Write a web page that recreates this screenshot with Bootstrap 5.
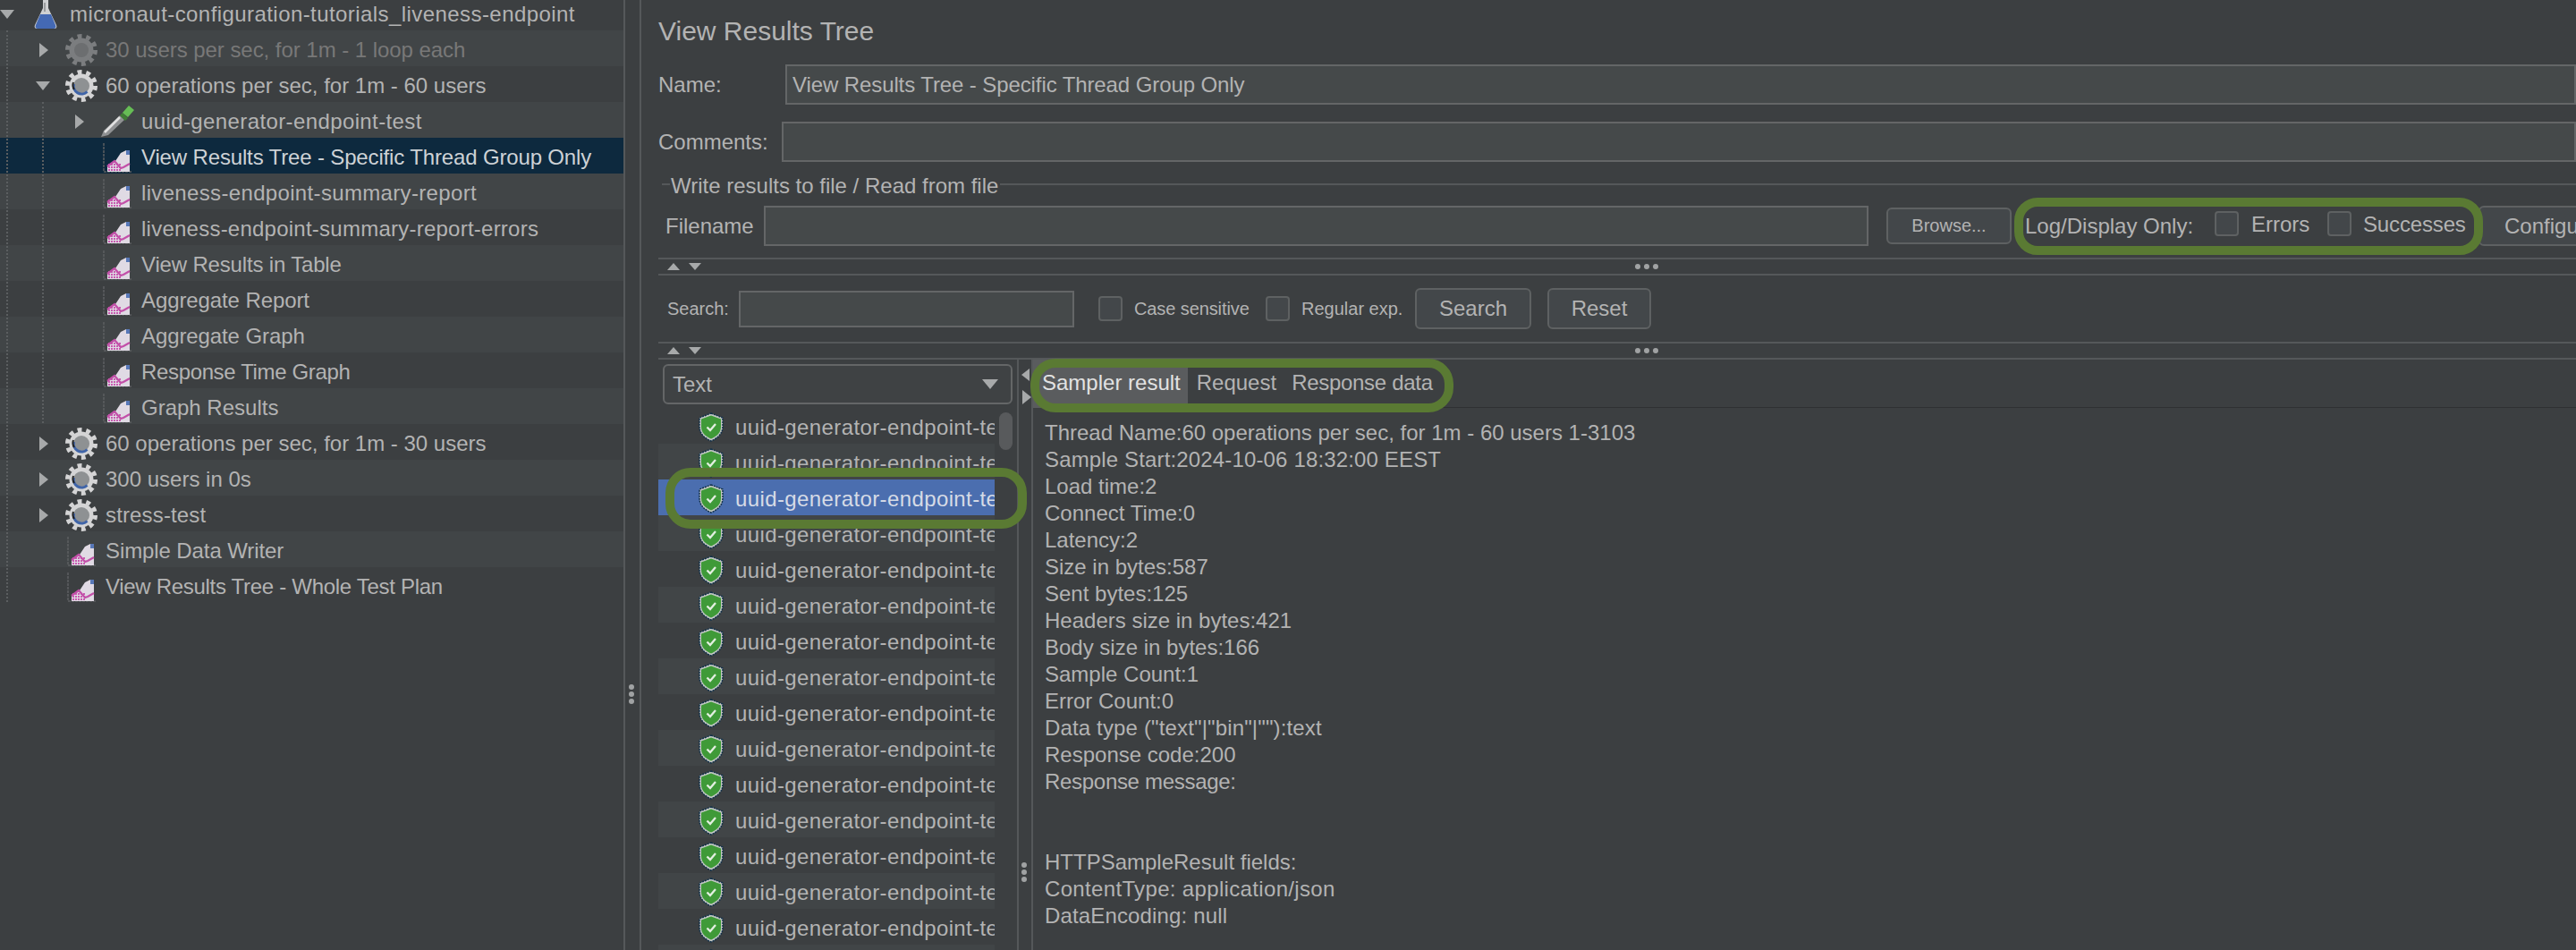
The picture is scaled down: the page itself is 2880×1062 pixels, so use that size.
<!DOCTYPE html>
<html lang="en"><head><meta charset="utf-8"><title>View Results Tree</title>
<link href="https://cdn.jsdelivr.net/npm/bootstrap@5.3.0/dist/css/bootstrap.min.css" rel="stylesheet">
<style>
html,body{height:1062px;overflow:hidden}
body{background:#3c3f41;color:#b3b3b3;font:24px/30px "Liberation Sans",Arial,sans-serif;width:2880px}
.tree{width:697px;flex:none;margin-top:-6px}
.guide{position:absolute;width:2px;border-left:2px dotted #5b5e60}
.g1{left:7px;top:40px;height:639px}
.g2{left:47px;top:120px;height:359px}
.trow{height:40px;white-space:nowrap;padding-top:3px}
.trow:nth-child(even){background:#414547}
.trow.sel{background:#0d293e;color:#cdd2d6}
.trow.off{color:#787878}
.l1{padding-left:40px}.l2{padding-left:80px}
.sp43{letter-spacing:.43px}.sp39{letter-spacing:.39px}.sp34{letter-spacing:.34px}.sp24{letter-spacing:.24px}.sp15{letter-spacing:.15px}
.sn05{letter-spacing:-.05px}.sn10{letter-spacing:-.1px}.sn15{letter-spacing:-.15px}.sn17{letter-spacing:-.17px}.sn30{letter-spacing:-.3px}.sn35{letter-spacing:-.35px}
.tw{width:16px;margin-right:15px;flex:none}
.ic{width:40px;margin-right:7px;flex:none}
.tri-r,.tri-d,.tri-u,.tri-l{display:block;width:0;height:0;border-style:solid;border-color:transparent}
.tri-r{border-width:8px 0 8px 10px;border-left-color:#a7a9aa;margin-left:4px}
.tri-d{border-width:10px 8px 0;border-top-color:#a7a9aa}
.tri-u.s{border-width:0 7px 8px;border-bottom-color:#a7a9aa}
.tri-d.s{border-width:8px 7px 0}
.tri-l{border-width:7px 9px 7px 0;border-right-color:#a7a9aa}
.split{width:20px;flex:none;border-left:2px solid #55585a;border-right:2px solid #55585a}
.dots i{display:block;width:6px;height:6px;border-radius:50%;background:#a0a2a3}
.main{flex:1;min-width:0;padding-left:19px;height:1062px}
.title{height:72px;font-size:30px;line-height:70px}
.lb{flex:none}
.form-control,.form-select{background-color:#45494a;border:2px solid #646667;border-radius:0;color:#b3b3b3;font:24px "Liberation Sans",Arial,sans-serif;padding:0 6px;height:45px;min-height:0;flex:1;box-shadow:none}
.name{height:45px}
.name .form-control{letter-spacing:-.1px;padding-left:6px}
.cmt{height:45px;margin-top:19px}
.set{height:49px;margin-left:4px}
.set span{padding-top:4px}
.set::before{content:"";width:9px;margin-right:1px}
.set::before,.set::after{border-top:2px solid #55585a}
.set::after{content:"";flex:1;margin-left:2px}
.file{height:45px;padding-left:8px}
.btn.j{background:#43474a;border:2px solid #5e6162;color:#b3b3b3;border-radius:6px;font:24px "Liberation Sans",Arial,sans-serif;padding:0;flex:none}
.browse{width:140px;height:41px;margin-left:20px;font-size:20px!important}
.frame{position:relative}
.frame::after{content:"";position:absolute;border:10px solid #5a7a33;pointer-events:none;z-index:5}
.logs{width:524px;margin-left:3px;padding-left:12px;height:45px;flex:none}
.logs::after{left:0;right:0;top:-9px;bottom:-10px;border-radius:26px}
.form-check-input.j{width:27px;height:28px;margin:0;flex:none;background-color:#43474a;border:2px solid #5e6162;border-radius:4px;float:none}
.logs .form-check-input{margin-top:-6px}
.logs .e{margin-top:-4px}
.cfg{width:149px;height:45px;margin-left:-5px;margin-right:-40px;text-align:left;padding-left:27px!important;border-radius:6px 0 0 6px!important}
.sash{height:20px;flex:none;border-top:2px solid #55585a;border-bottom:2px solid #55585a;padding-left:10px;margin-top:13px}
.sash .tri-d{margin-left:10px}
.sash .dots{margin-left:1044px}
.sash.b{margin-top:0}
.search{height:74px;padding-left:10px;font-size:20px}
.search .form-control{flex:none;width:375px;height:41px;margin-left:16px}
.search label{flex:none}
.lower{flex:1;min-height:0}
.col-l{width:401px;flex:none}
.combo{margin:5px 5px 4px 5px;width:391px;height:45px;border:2px solid #646667;border-radius:6px;padding:0 14px 0 9px;background:#3f4244}
.combo .tri-d{border-width:11px 9px 0}
.list{width:376px;flex:none}
.lrow{height:40px;padding:3px 0 0 44px;position:relative;letter-spacing:.39px}
.lrow:nth-child(even){background:#414547}
.lrow.sel{background:#4b6eaf;color:#d6dbe6}
.lrow.sel::after{left:8px;top:-13px;width:404px;height:68px;border-radius:28px}
.lrow svg{flex:none;margin-right:12px}
.lrow span{flex:1;overflow:hidden;white-space:nowrap;min-width:0;width:0}
.thumb{width:15px;height:42px;margin:5px 0 0 5px;border-radius:8px;background:#585a5c}
.split2{width:18px;flex:none;border-left:2px solid #55585a;border-right:2px solid #55585a;padding-top:10px}
.split2 .tri-l{margin:0 0 10px 3px}
.split2 .tri-r{margin:0 0 0 4px}
.split2 .dots{margin:512px 0 0 3px}
.split2 .dots i{margin-bottom:2px}
.split1dots{margin:765px 0 0 4px}
.split1dots i{margin-bottom:2px}
.pane{flex:1;min-width:0}
.tabs{height:54px;border-bottom:1px solid #2f3133;margin:0;flex-wrap:nowrap}
.tabwrap{width:467px;height:54px;display:flex}
.tabwrap::after{left:-3px;top:-1px;width:473px;height:60px;border-radius:28px}
.tabwrap a{color:#b3b3b3;text-decoration:none;height:49px;line-height:52px;padding:0 9px;flex:none}
.tabwrap a:first-child{padding-left:10px;padding-right:8px}
.tabwrap a.active{background:#5a5c5e;color:#e2e2e2;box-shadow:0 5px 0 #5a5c5e}
.tabwrap a+a{margin-left:1px}
.tabwrap a+a+a{margin-left:-1px}
.out{padding:13px 0 0 13px;white-space:pre;line-height:30px}
</style></head>
<body class="d-flex">
<svg width="0" height="0" class="position-absolute">
<defs>
<pattern id="dit" width="3" height="3" patternUnits="userSpaceOnUse"><rect width="2" height="2" fill="#c75bb0"/></pattern>
<symbol id="flask" viewBox="0 0 26 32"><path d="M10 0h6v9l9 19c1 2 0 4-2 4H3c-2 0-3-2-2-4l9-19z" fill="#cfd0d2"/><path d="M7 16h12l5 12c1 2 0 4-2 4H4c-2 0-3-2-2-4z" fill="#4469b4"/><path d="M11 3h2v10h-2z" fill="#9a9c9e"/></symbol>
<symbol id="gear" viewBox="0 0 36 36"><circle cx="18" cy="18" r="13.5" fill="#d4d4d5"/><circle cx="18" cy="18" r="15.5" fill="none" stroke="#d4d4d5" stroke-width="5" stroke-dasharray="4.87 4.87"/><circle cx="18" cy="18" r="9" fill="#8e9193"/><path d="M9.5 16a9 9 0 0 0 15 8.5" fill="none" stroke="#3f64a8" stroke-width="3"/><path d="M9 14a9 9 0 0 0 1 8" fill="none" stroke="#222" stroke-width="2"/></symbol>
<symbol id="gearoff" viewBox="0 0 36 36"><circle cx="18" cy="18" r="13.5" fill="#7b7d7f"/><circle cx="18" cy="18" r="15.5" fill="none" stroke="#7b7d7f" stroke-width="5" stroke-dasharray="4.87 4.87"/><circle cx="18" cy="18" r="8" fill="#6c6e70"/></symbol>
<symbol id="drop" viewBox="0 0 38 36"><path d="M1 35l3-7L22 11l5 5L9 33z" fill="#8f9193"/><path d="M5 30L22 13" stroke="#e2e2e2" stroke-width="2.5"/><path d="M22 11l3-3 6 6-3 3z" fill="#3f7d34"/><path d="M25 8l7-8 6 5-7 8z" fill="#66bd55"/></symbol>
<symbol id="graph" viewBox="0 0 33 34"><path d="M1 1v32h31" fill="none" stroke="#5c5f61" stroke-width="1.5" stroke-dasharray="3 1"/><path d="M5 33v-6l9-6 6-9 6-3h4v24z" fill="#e0dae4"/><path d="M26 9h4v5h-4z" fill="#5878b8"/><rect x="5" y="24" width="15" height="9" fill="url(#dit)"/><path d="M5 27l8-6 7 8 3-1 7-4" fill="none" stroke="#c24fa8" stroke-width="2.2"/></symbol>
<symbol id="shield" viewBox="0 0 30 33"><path d="M15 1l13 5v10c0 8-6 13-13 16C8 29 2 24 2 16V6z" fill="#c4c8c5" stroke="#12314a" stroke-width="1.5" stroke-dasharray="2 1"/><path d="M15 3.5l11 4v8.5c0 7-5 11-11 13.5-6-2.5-11-6.5-11-13.5V7.5z" fill="#3f9a38"/><path d="M10.5 16.5l3.5 3.5 6-7" fill="none" stroke="#e3efe1" stroke-width="2.3"/></symbol>
</defs></svg>

<aside class="tree position-relative">
<div>
<div class="trow sp43 d-flex align-items-center"><span class="tw"><i class="tri-d"></i></span><span class="ic text-center"><svg width="26" height="32"><use href="#flask"/></svg></span>micronaut-configuration-tutorials_liveness-endpoint</div>
<div class="trow off sn05 l1 d-flex align-items-center"><span class="tw"><i class="tri-r"></i></span><span class="ic d-flex justify-content-center"><svg width="36" height="36"><use href="#gearoff"/></svg></span>30 users per sec, for 1m - 1 loop each</div>
<div class="trow l1 d-flex align-items-center"><span class="tw"><i class="tri-d"></i></span><span class="ic d-flex justify-content-center"><svg width="36" height="36"><use href="#gear"/></svg></span>60 operations per sec, for 1m - 60 users</div>
<div class="trow sp39 l2 d-flex align-items-center"><span class="tw"><i class="tri-r"></i></span><span class="ic d-flex justify-content-center"><svg width="38" height="36"><use href="#drop"/></svg></span>uuid-generator-endpoint-test</div>
<div class="trow sel sn15 l2 d-flex align-items-center"><span class="tw"></span><span class="ic d-flex justify-content-center"><svg width="33" height="34"><use href="#graph"/></svg></span>View Results Tree - Specific Thread Group Only</div>
<div class="trow sp34 l2 d-flex align-items-center"><span class="tw"></span><span class="ic d-flex justify-content-center"><svg width="33" height="34"><use href="#graph"/></svg></span>liveness-endpoint-summary-report</div>
<div class="trow sp24 l2 d-flex align-items-center"><span class="tw"></span><span class="ic d-flex justify-content-center"><svg width="33" height="34"><use href="#graph"/></svg></span>liveness-endpoint-summary-report-errors</div>
<div class="trow sn17 l2 d-flex align-items-center"><span class="tw"></span><span class="ic d-flex justify-content-center"><svg width="33" height="34"><use href="#graph"/></svg></span>View Results in Table</div>
<div class="trow sn10 l2 d-flex align-items-center"><span class="tw"></span><span class="ic d-flex justify-content-center"><svg width="33" height="34"><use href="#graph"/></svg></span>Aggregate Report</div>
<div class="trow sn10 l2 d-flex align-items-center"><span class="tw"></span><span class="ic d-flex justify-content-center"><svg width="33" height="34"><use href="#graph"/></svg></span>Aggregate Graph</div>
<div class="trow sn35 l2 d-flex align-items-center"><span class="tw"></span><span class="ic d-flex justify-content-center"><svg width="33" height="34"><use href="#graph"/></svg></span>Response Time Graph</div>
<div class="trow l2 d-flex align-items-center"><span class="tw"></span><span class="ic d-flex justify-content-center"><svg width="33" height="34"><use href="#graph"/></svg></span>Graph Results</div>
<div class="trow l1 d-flex align-items-center"><span class="tw"><i class="tri-r"></i></span><span class="ic d-flex justify-content-center"><svg width="36" height="36"><use href="#gear"/></svg></span>60 operations per sec, for 1m - 30 users</div>
<div class="trow l1 d-flex align-items-center"><span class="tw"><i class="tri-r"></i></span><span class="ic d-flex justify-content-center"><svg width="36" height="36"><use href="#gear"/></svg></span>300 users in 0s</div>
<div class="trow sp15 l1 d-flex align-items-center"><span class="tw"><i class="tri-r"></i></span><span class="ic d-flex justify-content-center"><svg width="36" height="36"><use href="#gear"/></svg></span>stress-test</div>
<div class="trow sn10 l1 d-flex align-items-center"><span class="tw"></span><span class="ic d-flex justify-content-center"><svg width="33" height="34"><use href="#graph"/></svg></span>Simple Data Writer</div>
<div class="trow sn30 l1 d-flex align-items-center"><span class="tw"></span><span class="ic d-flex justify-content-center"><svg width="33" height="34"><use href="#graph"/></svg></span>View Results Tree - Whole Test Plan</div>
</div>
<i class="guide g1"></i><i class="guide g2"></i>
</aside>

<div class="split"><div class="dots split1dots"><i></i><i></i><i></i></div></div>

<main class="main d-flex flex-column">
<div class="title">View Results Tree</div>
<div class="name d-flex align-items-center"><label class="lb" style="width:142px">Name:</label><input class="form-control" value="View Results Tree - Specific Thread Group Only"></div>
<div class="cmt d-flex align-items-center"><label class="lb" style="width:138px">Comments:</label><input class="form-control"></div>
<div class="set d-flex align-items-center"><span>Write results to file / Read from file</span></div>
<div class="file d-flex align-items-center">
<label class="lb" style="width:110px">Filename</label><input class="form-control">
<button class="btn j browse">Browse...</button>
<div class="logs frame d-flex align-items-center"><span class="lb" style="width:212px">Log/Display Only:</span><input type="checkbox" class="form-check-input j"><span class="lb e" style="width:85px;margin-left:14px">Errors</span><input type="checkbox" class="form-check-input j"><span class="lb e sn15" style="margin-left:13px">Successes</span></div>
<button class="btn j cfg">Configure</button>
</div>
<div class="sash d-flex align-items-center"><i class="tri-u s"></i><i class="tri-d s"></i><div class="dots d-flex gap-1"><i></i><i></i><i></i></div></div>
<div class="search d-flex align-items-center"><label style="width:64px">Search:</label><input class="form-control"><input type="checkbox" class="form-check-input j" style="margin-left:27px"><label class="sn10" style="width:147px;margin-left:13px">Case sensitive</label><input type="checkbox" class="form-check-input j"><label style="width:127px;margin-left:13px">Regular exp.</label><button class="btn j" style="width:130px;height:46px">Search</button><button class="btn j" style="width:116px;height:46px;margin-left:18px">Reset</button></div>
<div class="sash b d-flex align-items-center"><i class="tri-u s"></i><i class="tri-d s"></i><div class="dots d-flex gap-1"><i></i><i></i><i></i></div></div>
<div class="lower d-flex">
<div class="col-l">
<div class="combo d-flex align-items-center justify-content-between"><span>Text</span><i class="tri-d"></i></div>
<div class="d-flex">
<div class="list">
<div class="lrow d-flex align-items-center"><svg width="30" height="33"><use href="#shield"/></svg><span>uuid-generator-endpoint-test</span></div>
<div class="lrow d-flex align-items-center"><svg width="30" height="33"><use href="#shield"/></svg><span>uuid-generator-endpoint-test</span></div>
<div class="lrow sel frame d-flex align-items-center"><svg width="30" height="33"><use href="#shield"/></svg><span>uuid-generator-endpoint-test</span></div>
<div class="lrow d-flex align-items-center"><svg width="30" height="33"><use href="#shield"/></svg><span>uuid-generator-endpoint-test</span></div>
<div class="lrow d-flex align-items-center"><svg width="30" height="33"><use href="#shield"/></svg><span>uuid-generator-endpoint-test</span></div>
<div class="lrow d-flex align-items-center"><svg width="30" height="33"><use href="#shield"/></svg><span>uuid-generator-endpoint-test</span></div>
<div class="lrow d-flex align-items-center"><svg width="30" height="33"><use href="#shield"/></svg><span>uuid-generator-endpoint-test</span></div>
<div class="lrow d-flex align-items-center"><svg width="30" height="33"><use href="#shield"/></svg><span>uuid-generator-endpoint-test</span></div>
<div class="lrow d-flex align-items-center"><svg width="30" height="33"><use href="#shield"/></svg><span>uuid-generator-endpoint-test</span></div>
<div class="lrow d-flex align-items-center"><svg width="30" height="33"><use href="#shield"/></svg><span>uuid-generator-endpoint-test</span></div>
<div class="lrow d-flex align-items-center"><svg width="30" height="33"><use href="#shield"/></svg><span>uuid-generator-endpoint-test</span></div>
<div class="lrow d-flex align-items-center"><svg width="30" height="33"><use href="#shield"/></svg><span>uuid-generator-endpoint-test</span></div>
<div class="lrow d-flex align-items-center"><svg width="30" height="33"><use href="#shield"/></svg><span>uuid-generator-endpoint-test</span></div>
<div class="lrow d-flex align-items-center"><svg width="30" height="33"><use href="#shield"/></svg><span>uuid-generator-endpoint-test</span></div>
<div class="lrow d-flex align-items-center"><svg width="30" height="33"><use href="#shield"/></svg><span>uuid-generator-endpoint-test</span></div>
<div class="lrow d-flex align-items-center"><svg width="30" height="33"><use href="#shield"/></svg><span>uuid-generator-endpoint-test</span></div>
</div>
<div class="thumb"></div>
</div>
</div>
<div class="split2"><i class="tri-l"></i><i class="tri-r"></i><div class="dots"><i></i><i></i><i></i></div></div>
<div class="pane">
<div class="tabs d-flex"><nav class="tabwrap frame"><a class="active" href="#">Sampler result</a><a href="#">Request</a><a class="sn30" href="#">Response data</a></nav></div>
<div class="out">Thread Name:60 operations per sec, for 1m - 60 users 1-3103
<span class="sp15">Sample Start:2024-10-06 18:32:00 EEST</span>
Load time:2
Connect Time:0
Latency:2
Size in bytes:587
Sent bytes:125
Headers size in bytes:421
Body size in bytes:166
Sample Count:1
Error Count:0
<span class="sp15">Data type ("text"|"bin"|""):text</span>
Response code:200
<span class="sn30">Response message:</span>


HTTPSampleResult fields:
<span class="sp34">ContentType: application/json</span>
<span class="sp15">DataEncoding: null</span></div>
</div>
</div>
</main>
<script src="https://cdn.jsdelivr.net/npm/bootstrap@5.3.0/dist/js/bootstrap.bundle.min.js"></script>
</body></html>
